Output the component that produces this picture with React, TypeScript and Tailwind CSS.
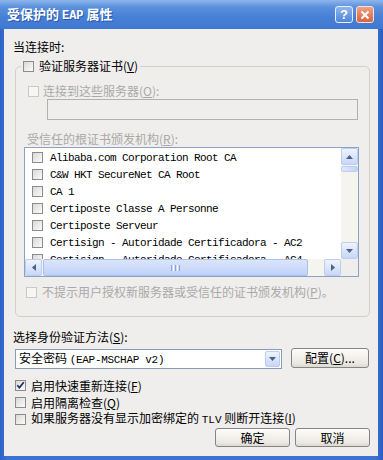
import React from "react";

function Check({ checked = false, disabled = false }: { checked?: boolean; disabled?: boolean }) {
  return (
    <span
      className={
        disabled
          ? "relative inline-flex items-center justify-center w-[11px] h-[11px] shrink-0 border border-[#cac9c2] bg-[#f6f6f4]"
          : "relative inline-flex items-center justify-center w-[11px] h-[11px] shrink-0 border border-[#8a8c8f] bg-[linear-gradient(135deg,#d9d9d3,#fbfbfa)]"
      }
    >
      {checked && (
        <svg width="9" height="9" viewBox="0 0 9 9">
          <path d="M1.3 4.2 L3.4 6.6 L7.8 1.2" fill="none" stroke="#1c326e" strokeWidth="1.7" />
        </svg>
      )}
    </span>
  );
}

function SBtn({ dir }: { dir: "up" | "down" | "left" | "right" }) {
  const pts =
    dir === "up"
      ? "0,4 3.5,0 7,4"
      : dir === "down"
      ? "0,0 7,0 3.5,4"
      : dir === "left"
      ? "4,0 4,7 0,3.5"
      : "0,0 0,7 4,3.5";
  const w = dir === "up" || dir === "down" ? 7 : 4;
  const h = dir === "up" || dir === "down" ? 4 : 7;
  return (
    <div className="w-[17px] h-[17px] shrink-0 flex items-center justify-center rounded-[2px] border border-[#bccdf1] bg-[linear-gradient(180deg,#eef3fe,#c8d7f7)]">
      <svg width={w} height={h} viewBox={`0 0 ${w} ${h}`}>
        <polygon points={pts} fill="#4d6185" />
      </svg>
    </div>
  );
}

const items = [
  "Alibaba.com Corporation Root CA",
  "C&W HKT SecureNet CA Root",
  "CA 1",
  "Certiposte Classe A Personne",
  "Certiposte Serveur",
  "Certisign - Autoridade Certificadora - AC2",
  "Certisign - Autoridade Certificadora - AC4",
];

function Btn({ children, w }: { children: React.ReactNode; w: string }) {
  return (
    <div
      className={`${w} flex items-center justify-center rounded-[3px] border border-[#858585] bg-[linear-gradient(180deg,#fdfdfb,#ebe8e1_80%,#dcd8ce)] text-black`}
    >
      {children}
    </div>
  );
}

export default function App() {
  return (
    <div className="w-[383px] h-[460px] flex flex-col bg-[linear-gradient(90deg,#2f63c8,#3d72d2_2%,#3d72d2_98%,#2a5cc2)] font-['Noto_Sans_CJK_SC',sans-serif] overflow-hidden">
      {/* Title bar */}
      <div className="h-[29px] shrink-0 flex items-center bg-[linear-gradient(180deg,#8db6ec_0%,#5a90dc_25%,#4680d6_60%,#3f78d1_100%)]">
        <div className="ml-[7px] text-[13px] leading-[16px] font-bold text-white [text-shadow:1px_1px_0_#2a55a8] flex-1">
          受保护的 <span className="font-['Liberation_Mono',monospace] text-[12px]">EAP</span> 属性
        </div>
        <div className="w-[18px] h-[17px] rounded-[3px] border border-[#e8f0fc] bg-[linear-gradient(180deg,#8fb5ee,#4f86d8)] flex items-center justify-center text-white text-[13px] font-bold leading-none font-['Liberation_Sans',sans-serif]">
          ?
        </div>
        <div className="ml-[3px] mr-[9px] w-[18px] h-[17px] rounded-[3px] border border-[#f3e3dc] bg-[linear-gradient(180deg,#eea184,#d9633c)] flex items-center justify-center">
          <svg width="10" height="10" viewBox="0 0 10 10">
            <path d="M1.5 1.5 L8.5 8.5 M8.5 1.5 L1.5 8.5" stroke="#fff" strokeWidth="2" />
          </svg>
        </div>
      </div>

      {/* Body */}
      <div className="flex-1 ml-[4px] mr-[5px] mb-[4px] bg-[#efeeed] flex flex-col text-[12px] leading-[14px] text-black">
        <div className="mt-[11px] ml-[9px]">当连接时:</div>

        {/* Group box */}
        <div className="relative mt-[12px] ml-[11px] w-[355px] h-[251px] shrink-0 border border-[#d2d1c8] rounded-[5px] flex flex-col">
          <div className="absolute -top-[8px] left-[5px] h-[14px] px-[2px] bg-[#efeeed] flex items-center gap-[5px]">
            <Check />
            <span>
              验证服务器证书(<span className="underline">V</span>)
            </span>
          </div>

          <div className="mt-[17px] ml-[12px] h-[14px] flex items-center gap-[4px] text-[#a9a9a6]">
            <Check disabled />
            <span>
              连接到这些服务器(<span className="underline">O</span>):
            </span>
          </div>

          <div className="mt-[1px] ml-[31px] w-[311px] h-[21px] border border-[#b2b1ac] bg-[#efeeed]" />

          <div className="mt-[12px] ml-[11px] text-[#a9a9a6]">
            受信任的根证书颁发机构(<span className="underline">R</span>):
          </div>

          {/* List */}
          <div className="mt-[1px] ml-[8px] w-[335px] h-[130px] border border-[#8da2c0] bg-white flex flex-col">
            <div className="flex-1 flex overflow-hidden">
              <div className="flex-1 overflow-hidden pt-px">
                {items.map((t) => (
                  <div key={t} className="h-[17px] flex items-center pl-[7px] gap-[7px] whitespace-nowrap">
                    <Check />
                    <span className="font-['Liberation_Mono',monospace] text-[11px] tracking-[-0.6px]">{t}</span>
                  </div>
                ))}
              </div>
              <div className="w-[17px] flex flex-col bg-[#f5f4ef]">
                <SBtn dir="up" />
                <div className="mt-px h-[6px] rounded-[2px] border border-[#bccdf1] bg-[linear-gradient(90deg,#dfe8fd,#c3d3f7)]" />
                <div className="flex-1" />
                <SBtn dir="down" />
              </div>
            </div>
            <div className="h-[17px] flex bg-[#f5f4ef]">
              <SBtn dir="left" />
              <div className="ml-[1px] w-[265px] h-[17px] rounded-[2px] border border-[#a9c0ef] bg-[linear-gradient(180deg,#dbe5fd,#c0d1f8)] flex items-center justify-center gap-[1px]">
                <span className="w-px h-[6px] bg-[#8aa3dc]" />
                <span className="w-px h-[6px] bg-white" />
                <span className="w-px h-[6px] bg-[#8aa3dc]" />
                <span className="w-px h-[6px] bg-white" />
                <span className="w-px h-[6px] bg-[#8aa3dc]" />
              </div>
              <div className="flex-1" />
              <SBtn dir="right" />
              <div className="w-[17px] bg-[#efeeed]" />
            </div>
          </div>

          <div className="mt-[8px] ml-[10px] h-[14px] flex items-center gap-[5px] text-[#a9a9a6]">
            <Check disabled />
            <span>
              不提示用户授权新服务器或受信任的证书颁发机构(<span className="underline">P</span>)。
            </span>
          </div>
        </div>

        <div className="mt-[13px] ml-[9px]">
          选择身份验证方法(<span className="underline">S</span>):
        </div>

        <div className="mt-[5px] ml-[11px] flex items-start">
          <div className="w-[267px] h-[20px] border border-[#8a9bb5] bg-white flex items-center">
            <span className="ml-[3px] flex-1 whitespace-nowrap">
              安全密码 <span className="font-['Liberation_Mono',monospace] text-[11px] tracking-[-0.3px]">(EAP-MSCHAP v2)</span>
            </span>
            <div className="mr-[1px] w-[15px] h-[16px] rounded-[2px] border border-[#bccdf1] bg-[linear-gradient(180deg,#eef3fe,#c8d7f7)] flex items-center justify-center">
              <svg width="7" height="4" viewBox="0 0 7 4">
                <polygon points="0,0 7,0 3.5,4" fill="#4d6185" />
              </svg>
            </div>
          </div>
          <div className="ml-[9px] -mt-[1px] h-[20px] flex">
            <Btn w="w-[78px]">
              配置(<span className="underline">C</span>)...
            </Btn>
          </div>
        </div>

        <div className="mt-[8px] ml-[11px] flex flex-col">
          <div className="h-[17px] flex items-center gap-[5px]">
            <Check checked />
            <span>
              启用快速重新连接(<span className="underline">F</span>)
            </span>
          </div>
          <div className="h-[17px] flex items-center gap-[5px]">
            <Check />
            <span>
              启用隔离检查(<span className="underline">Q</span>)
            </span>
          </div>
          <div className="h-[16px] flex items-center gap-[5px] whitespace-nowrap">
            <Check />
            <span>
              如果服务器没有显示加密绑定的 <span className="font-['Liberation_Mono',monospace] text-[11px]">TLV</span> 则断开连接(<span className="underline">I</span>)
            </span>
          </div>
        </div>

        <div className="mt-[1px] mr-[8px] h-[19px] flex justify-end gap-[5px]">
          <Btn w="w-[75px]">确定</Btn>
          <Btn w="w-[75px]">取消</Btn>
        </div>
      </div>
    </div>
  );
}
